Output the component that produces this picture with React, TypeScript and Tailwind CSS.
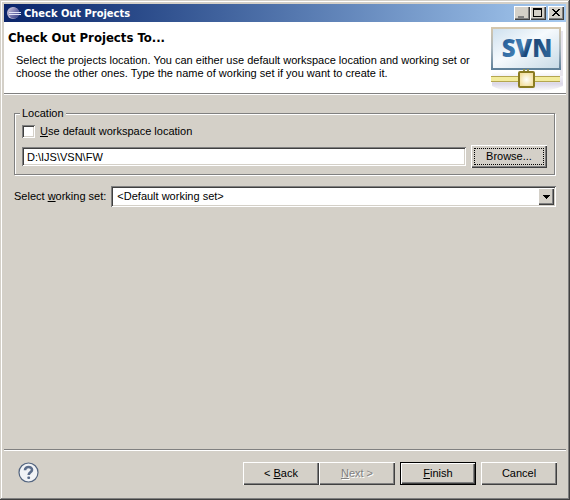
import type { ReactNode } from 'react';

const bevel =
  'bg-[#d4d0c8] shadow-[inset_1px_1px_0_#ffffff,inset_-1px_-1px_0_#404040,inset_-2px_-2px_0_#808080]';
const sunken =
  'bg-white shadow-[inset_1px_1px_0_#808080,inset_-1px_-1px_0_#ffffff,inset_2px_2px_0_#404040,inset_-2px_-2px_0_#d4d0c8]';

function EclipseIcon() {
  return (
    <svg width="16" height="16" viewBox="0 0 16 16" className="shrink-0" aria-hidden="true">
      <defs>
        <linearGradient id="orb" x1="0" y1="0" x2="1" y2="1">
          <stop offset="0" stopColor="#d0c9de" />
          <stop offset="0.5" stopColor="#7374ac" />
          <stop offset="1" stopColor="#303a80" />
        </linearGradient>
      </defs>
      <circle cx="7" cy="8" r="6" fill="#b9b4cf" />
      <circle cx="8" cy="8" r="5.500" fill="url(#orb)" />
      <path d="M3 7.500H15M3 9.500H15" stroke="#e3e5f7" strokeWidth="1" />
    </svg>
  );
}

function SvnLogo() {
  return (
    <svg width="74" height="66" viewBox="0 0 74 66" className="shrink-0" role="img" aria-label="SVN">
      <defs>
        <linearGradient id="panel" x1="0" y1="0" x2="1" y2="1">
          <stop offset="0" stopColor="#ccdfee" />
          <stop offset="0.45" stopColor="#f6fafd" />
          <stop offset="1" stopColor="#c6d9e6" />
        </linearGradient>
        <linearGradient id="frame" x1="0" y1="0" x2="0" y2="1">
          <stop offset="0" stopColor="#d5c7ad" />
          <stop offset="0.5" stopColor="#a8b5bd" />
          <stop offset="1" stopColor="#60819a" />
        </linearGradient>
        <linearGradient id="ink" x1="0" y1="0" x2="1" y2="0.4">
          <stop offset="0" stopColor="#1d5390" />
          <stop offset="0.5" stopColor="#4480b4" />
          <stop offset="0.65" stopColor="#1c4677" />
          <stop offset="1" stopColor="#2b6094" />
        </linearGradient>
        <linearGradient id="shade" x1="0" y1="0" x2="0" y2="1">
          <stop offset="0" stopColor="#ffffff" />
          <stop offset="0.6" stopColor="#dcd8e8" />
          <stop offset="1" stopColor="#ffffff" />
        </linearGradient>
        <radialGradient id="node">
          <stop offset="0" stopColor="#ffffff" />
          <stop offset="1" stopColor="#f3dfa0" />
        </radialGradient>
      </defs>
      <path d="M2 46H73V60Q60 66 40 65Q14 67 2 60Z" fill="url(#shade)" />
      <path d="M70 5H73V50H70Z" fill="#e7e4ec" />
      <rect x="2" y="2" width="68" height="41" fill="url(#panel)" stroke="url(#frame)" strokeWidth="2" />
      <text
        x="37"
        y="31"
        textAnchor="middle"
        fontSize="24"
        className="font-['Open_Sans',sans-serif] font-extrabold"
        fill="url(#ink)"
      >
        SVN
      </text>
      <path d="M34 43V48M38 43V48" stroke="#8f9057" strokeWidth="2" />
      <rect x="1" y="50" width="69" height="6" fill="#f3ec9d" />
      <path d="M1 50.500H70M1 55.500H70" stroke="#b4a650" />
      <rect x="29" y="46" width="15" height="15" rx="1" fill="url(#node)" stroke="#8b7b22" strokeWidth="2" />
    </svg>
  );
}

function CaptionButton({ label, children }: { label: string; children: ReactNode }) {
  return (
    <button type="button" aria-label={label} className={`h-3.5 w-4 ${bevel}`}>
      <svg width="16" height="14" viewBox="0 0 16 14" shapeRendering="crispEdges" aria-hidden="true">
        {children}
      </svg>
    </button>
  );
}

function PushButton({ children, disabled = false }: { children: ReactNode; disabled?: boolean }) {
  return (
    <button
      type="button"
      disabled={disabled}
      className={`h-[23px] w-[76px] ${bevel} disabled:text-[#808080] disabled:[text-shadow:1px_1px_0_#ffffff]`}
    >
      {children}
    </button>
  );
}

export default function App() {
  return (
    <div className="flex min-h-screen flex-col bg-[#d4d0c8] p-1 font-['Liberation_Sans',sans-serif] text-[11px] leading-[13px] text-black shadow-[inset_-1px_-1px_0_#404040,inset_1px_1px_0_#d4d0c8,inset_-2px_-2px_0_#808080,inset_2px_2px_0_#ffffff]">
      <header className="flex h-[18px] items-center gap-0.5 bg-linear-to-r from-[#0a246a] to-[#a6caf0] px-0.5 text-white">
        <EclipseIcon />
        <span className="grow font-['DejaVu_Sans_Condensed','DejaVu_Sans',sans-serif] font-bold">
          Check Out Projects
        </span>
        <div className="flex">
          <CaptionButton label="Minimize">
            <path d="M4 10H10V12H4Z" fill="#808080" />
          </CaptionButton>
          <CaptionButton label="Maximize">
            <path d="M3 2H12V11H3ZM4 4V10H11V4Z" fill="#000000" fillRule="evenodd" />
          </CaptionButton>
          <div className="ml-0.5 flex">
            <CaptionButton label="Close">
              <path
                d="M4 3h2v1h1v1h2v-1h1v-1h2v1h-1v1h-1v1h-1v1h1v1h1v1h1v1h-2v-1h-1v-1h-2v1h-1v1h-2v-1h1v-1h1v-1h1v-1h-1v-1h-1v-1h-1z"
                fill="#000000"
              />
            </CaptionButton>
          </div>
        </div>
      </header>

      <section className="flex justify-between border-b border-[#808080] bg-white pr-0.5">
        <div className="pt-2 pl-1">
          <h1 className="font-['DejaVu_Sans_Condensed','DejaVu_Sans',sans-serif] text-[13px] leading-4 font-bold">
            Check Out Projects To...
          </h1>
          <p className="mt-2 ml-2 max-w-[460px]">
            Select the projects location. You can either use default workspace location and working set or choose the
            other ones. Type the name of working set if you want to create it.
          </p>
        </div>
        <div className="pt-1 pb-px">
          <SvnLogo />
        </div>
      </section>

      <main className="grow border-t border-white px-2.5 pt-3">
        <fieldset className="mr-px border border-[#808080] px-[7px] pb-1.5 shadow-[1px_1px_0_#ffffff,inset_1px_1px_0_#ffffff]">
          <legend className="-ml-0.5 bg-[#d4d0c8] px-0.5">Location</legend>
          <div className="flex items-center gap-[5px] pt-[5px]">
            <input id="default-location" type="checkbox" className={`size-[13px] appearance-none ${sunken}`} />
            <label htmlFor="default-location">
              <u>U</u>se default workspace location
            </label>
          </div>
          <div className="mt-[7px] flex items-center gap-[5px]">
            <input
              type="text"
              aria-label="Location"
              defaultValue="D:\IJS\VSN\FW"
              className={`h-[19px] min-w-0 grow px-[5px] outline-none ${sunken}`}
            />
            <button type="button" className={`h-[23px] w-[76px] p-[3px] ${bevel}`}>
              <span className="flex h-full items-center justify-center border border-dotted border-black">
                Browse...
              </span>
            </button>
          </div>
        </fieldset>

        <div className="mt-[11px] flex items-center gap-[5px]">
          <label htmlFor="working-set">
            Select <u>w</u>orking set:
          </label>
          <div className="relative flex grow">
            <select id="working-set" className={`h-[21px] w-full appearance-none px-1.5 outline-none ${sunken}`}>
              <option>&lt;Default working set&gt;</option>
            </select>
            <span
              className={`pointer-events-none absolute top-0.5 right-0.5 flex h-[17px] w-4 items-center justify-center ${bevel}`}
            >
              <svg width="7" height="4" viewBox="0 0 7 4" shapeRendering="crispEdges" aria-hidden="true">
                <path d="M0 0H7V1H6V2H5V3H4V4H3V3H2V2H1V1H0Z" />
              </svg>
            </span>
          </div>
        </div>
      </main>

      <footer className="flex items-start justify-between border-t border-[#808080] pr-[9px] pb-[11px] pl-3.5 shadow-[inset_0_1px_0_#ffffff]">
        <button type="button" aria-label="Help" className="mt-3">
          <svg width="21" height="21" viewBox="0 0 21 21" aria-hidden="true">
            <circle cx="10.500" cy="10.500" r="9.500" fill="#f1f3f6" stroke="#52647f" strokeWidth="1.200" />
            <path
              d="M7 8.200C7 3.800 14.200 4 14 8C13.900 10.300 10.700 10.400 10.700 13"
              fill="none"
              stroke="#5b6d8b"
              strokeWidth="2.600"
            />
            <rect x="9.300" y="14.500" width="2.800" height="2.600" rx="1" fill="#5b6d8b" />
          </svg>
        </button>
        <div className="flex gap-[5px] pt-3">
          <div className="flex">
            <PushButton>
              &lt; <u>B</u>ack
            </PushButton>
            <PushButton disabled>
              <u>N</u>ext &gt;
            </PushButton>
          </div>
          <button
            type="submit"
            className="h-[23px] w-[76px] border border-black bg-[#d4d0c8] shadow-[inset_1px_1px_0_#ffffff,inset_-1px_-1px_0_#404040,inset_-2px_-2px_0_#808080]"
          >
            <u>F</u>inish
          </button>
          <PushButton>Cancel</PushButton>
        </div>
      </footer>
    </div>
  );
}
